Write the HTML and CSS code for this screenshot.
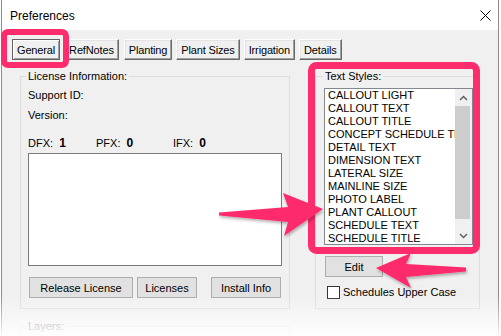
FILE: index.html
```html
<!DOCTYPE html>
<html lang="en">
<head>
  <meta charset="UTF-8" />
  <title>Preferences</title>
  <link rel="stylesheet" href="styles.css">
</head>
<body>

  <div class="window">
    <div class="titlebar">
      <span class="title">Preferences</span>
      <svg class="close" width="11" height="11" viewBox="0 0 11 11">
        <path d="M0.5 0.5 L10.5 10.5 M10.5 0.5 L0.5 10.5" stroke="#000" stroke-width="1" />
      </svg>
    </div>

    <div class="dialog">
      <div class="tabs">
        <button class="tab tab-active">General</button>
        <button class="tab">RefNotes</button>
        <button class="tab tab-planting">Planting</button>
        <button class="tab">Plant Sizes</button>
        <button class="tab">Irrigation</button>
        <button class="tab">Details</button>
      </div>

      <div class="groups">
        <fieldset class="group license">
          <legend>License Information:</legend>
          <div class="field">Support ID:</div>
          <div class="field field-version">Version:</div>
          <div class="counts">
            <span class="count">DFX: <b>1</b></span>
            <span class="count count-pfx">PFX: <b>0</b></span>
            <span class="count">IFX: <b>0</b></span>
          </div>
          <div class="license-box"></div>
          <div class="license-buttons">
            <button class="btn btn-release">Release License</button>
            <button class="btn btn-licenses">Licenses</button>
            <button class="btn btn-install">Install Info</button>
          </div>
        </fieldset>

        <fieldset class="group styles">
          <legend>Text Styles:</legend>
          <div class="listbox">
            <ul class="list-items">
              <li>CALLOUT LIGHT</li>
              <li>CALLOUT TEXT</li>
              <li>CALLOUT TITLE</li>
              <li>CONCEPT SCHEDULE TEXT</li>
              <li>DETAIL TEXT</li>
              <li>DIMENSION TEXT</li>
              <li>LATERAL SIZE</li>
              <li>MAINLINE SIZE</li>
              <li>PHOTO LABEL</li>
              <li>PLANT CALLOUT</li>
              <li>SCHEDULE TEXT</li>
              <li>SCHEDULE TITLE</li>
            </ul>
            <div class="scrollbar">
              <div class="scroll-btn">
                <svg width="9" height="6" viewBox="0 0 9 6"><path d="M1 5 L4.5 1.5 L8 5" fill="none" stroke="#606060" stroke-width="1.5" /></svg>
              </div>
              <div class="scroll-track"><div class="scroll-thumb"></div></div>
              <div class="scroll-btn">
                <svg width="9" height="6" viewBox="0 0 9 6"><path d="M1 1 L4.5 4.5 L8 1" fill="none" stroke="#606060" stroke-width="1.5" /></svg>
              </div>
            </div>
          </div>
          <button class="btn btn-edit">Edit</button>
          <label class="check"><span class="checkbox"></span>Schedules Upper Case</label>
        </fieldset>
      </div>

      <fieldset class="group layers">
        <legend>Layers:</legend>
      </fieldset>
    </div>
  </div>

  <div class="fade"></div>

  <!-- callout annotations drawn over the dialog -->
  <svg class="annotations" width="501" height="336" viewBox="0 0 501 336">
    <defs>
      <filter id="shadow" x="-20%" y="-20%" width="140%" height="140%">
        <feDropShadow dx="1" dy="2" stdDeviation="1.5" flood-color="#000" flood-opacity="0.3" />
      </filter>
    </defs>
    <rect x="4" y="32" width="62" height="33" rx="4" fill="none" stroke="#fd2c6c" stroke-width="6" />
    <rect x="311.5" y="65.5" width="165" height="185" rx="5" fill="none" stroke="#fd2c6c" stroke-width="7" />
    <path filter="url(#shadow)" fill="#fd2c6c"
          d="M219 212.5 L288 207 L283 193 L323 209 L284 236 L288 222 L219 215.5 Z" />
    <path filter="url(#shadow)" fill="#fd2c6c"
          d="M376 268 L411 253 L406 264 L466 267.5 L466 271.5 L406 277 L411 288 Z" />
  </svg>

</body>
</html>
```

FILE: styles.css
```css
body {
  margin: 0;
  width: 501px;
  height: 336px;
  overflow: hidden;
  position: relative;
  background: #ffffff;
  font-family: "Liberation Sans", Arial, sans-serif;
  font-size: 11px;
  color: #000;
}

.window {
  margin-left: 1px;
  width: 498px;
  height: 336px;
  box-sizing: border-box;
  border-left: 1px solid #8c8c8c;
  border-right: 1px solid #8c8c8c;
  display: flex;
  flex-direction: column;
  overflow: hidden;
}

.titlebar {
  height: 30px;
  flex: none;
  background: #ffffff;
  display: flex;
  align-items: center;
  justify-content: space-between;
  padding: 2px 7px 0 8px;
  box-sizing: border-box;
}

.title {
  font-size: 12px;
}

.close {
  margin-top: -2px;
}

.dialog {
  flex: 1;
  min-height: 0;
  overflow: hidden;
  background: #f0f0f0;
}

/* tab row of classic 3D buttons */
.tabs {
  display: flex;
  gap: 4px;
  padding: 9px 0 0 10px;
}

.tab {
  font: inherit;
  letter-spacing: -0.15px;
  height: 21px;
  padding: 0 4px;
  background: #f0f0f0;
  border: 1px solid;
  border-color: #ffffff #696969 #696969 #ffffff;
  box-shadow: inset -1px -1px #a0a0a0, inset 1px 1px #e3e3e3;
  color: #000;
}

.tab-active {
  border-color: #646464;
  box-shadow: inset 1px 1px #ffffff, inset -1px -1px #a0a0a0;
}

.tab-planting {
  margin-left: 1px;
}

.groups {
  display: flex;
  gap: 25px;
  padding: 10px 0 0 18px;
}

.group {
  margin: 0;
  min-width: 0;
  box-sizing: border-box;
  border: 1px solid #dcdcdc;
}

.group legend {
  padding: 0 2px;
  margin-left: -2px;
  line-height: 13px;
}

.license {
  width: 270px;
  padding: 6px 7px 9px 7px;
}

.field {
  line-height: 13px;
}

.field-version {
  margin-top: 7px;
}

.counts {
  display: flex;
  margin-top: 15px;
  line-height: 13px;
}

.count {
  width: 68px;
}

.count-pfx {
  width: 77px;
}

.count b {
  font-size: 12px;
  margin-left: 3px;
}

.license-box {
  margin-top: 3px;
  height: 113px;
  width: 254px;
  box-sizing: border-box;
  background: #ffffff;
  border: 1px solid #7a7a7a;
}

.license-buttons {
  display: flex;
  gap: 4px;
  margin-top: 11px;
  padding-left: 1px;
}

.btn {
  font: inherit;
  height: 21px;
  padding: 0;
  background: #e1e1e1;
  border: 1px solid #adadad;
  color: #000;
}

.btn-release {
  width: 104px;
}

.btn-licenses {
  width: 60px;
}

.btn-install {
  width: 70px;
  margin-left: 10px;
}

.styles {
  width: 165px;
  padding: 5px 8px 9px 8px;
}

.styles legend {
  margin-left: -1px;
}

.listbox {
  display: flex;
  width: 149px;
  height: 157px;
  box-sizing: border-box;
  background: #ffffff;
  border: 1px solid #828790;
}

.list-items {
  list-style: none;
  margin: 0;
  padding: 0 0 0 3px;
  flex: 1;
  overflow: hidden;
  white-space: nowrap;
}

.list-items li {
  line-height: 13px;
}

.scrollbar {
  width: 17px;
  flex: none;
  background: #f0f0f0;
  display: flex;
  flex-direction: column;
}

.scroll-btn {
  height: 17px;
  display: flex;
  align-items: center;
  justify-content: center;
}

.scroll-track {
  flex: 1;
}

.scroll-thumb {
  height: 113px;
  margin-right: 2px;
  background: #cdcdcd;
}

.btn-edit {
  display: block;
  width: 58px;
  margin: 11px 0 0 1px;
}

.check {
  display: flex;
  align-items: center;
  margin: 9px 0 0 3px;
  line-height: 13px;
}

.checkbox {
  width: 13px;
  height: 13px;
  box-sizing: border-box;
  background: #ffffff;
  border: 1px solid #333333;
  margin-right: 3px;
}

.layers {
  width: 270px;
  height: 40px;
  margin: 11px 0 0 18px;
  padding: 0 7px;
  color: #6d6d6d;
}

.fade {
  position: absolute;
  left: 0;
  top: 296px;
  width: 501px;
  height: 40px;
  background: linear-gradient(to bottom, rgba(255, 255, 255, 0), rgba(255, 255, 255, 0.92));
}

.annotations {
  position: absolute;
  left: 0;
  top: 0;
  pointer-events: none;
}
```
